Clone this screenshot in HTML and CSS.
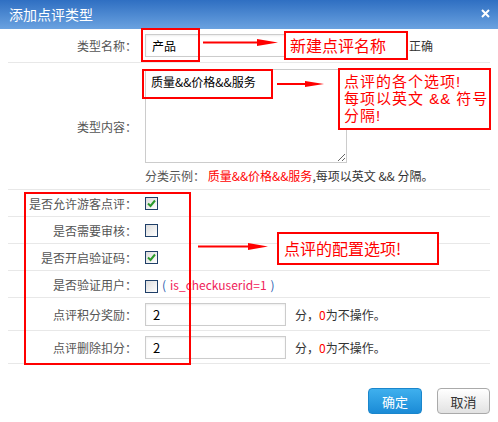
FILE: index.html
```html
<!DOCTYPE html>
<html lang="zh-CN">
<head>
  <meta charset="UTF-8">
  <meta name="viewport" content="width=device-width, initial-scale=1.0">
  <title>添加点评类型</title>
  <link rel="stylesheet" href="styles.css">
</head>
<body>
  <div class="dialog">
    <div class="titlebar">
      <span class="title">添加点评类型</span>
      <span class="close">
        <svg width="9" height="9" viewBox="0 0 9 9"><path d="M1 1L8 8M8 1L1 8" stroke="#fff" stroke-width="2"/></svg>
      </span>
    </div>

    <div class="form">
      <div class="row row-name">
        <div class="label">类型名称：</div>
        <div class="field">
          <input type="text" class="input input-name" value="产品">
          <span class="msg">正确</span>
        </div>
      </div>

      <div class="row row-content">
        <div class="label">类型内容：</div>
        <div class="field field-stack">
          <textarea class="textarea">质量&amp;&amp;价格&amp;&amp;服务</textarea>
          <div class="hint">
            <span class="hint-label">分类示例：</span>
            <span class="red">质量&amp;&amp;价格&amp;&amp;服务</span>,每项以英文 &amp;&amp; 分隔。
          </div>
        </div>
      </div>

      <div class="row row-check">
        <div class="label">是否允许游客点评：</div>
        <div class="field"><span class="checkbox checked"><svg width="11" height="11" viewBox="0 0 11 11"><path d="M2 5.5L4.5 8L9 2.5" fill="none" stroke="#2b9a2b" stroke-width="2"/></svg></span></div>
      </div>
      <div class="row row-check">
        <div class="label">是否需要审核：</div>
        <div class="field"><span class="checkbox"></span></div>
      </div>
      <div class="row row-check">
        <div class="label">是否开启验证码：</div>
        <div class="field"><span class="checkbox checked"><svg width="11" height="11" viewBox="0 0 11 11"><path d="M2 5.5L4.5 8L9 2.5" fill="none" stroke="#2b9a2b" stroke-width="2"/></svg></span></div>
      </div>
      <div class="row row-check">
        <div class="label">是否验证用户：</div>
        <div class="field field-user">
          <span class="checkbox"></span>
          <span class="paren">(</span><span class="code">is_checkuserid=1</span><span class="paren">)</span>
        </div>
      </div>

      <div class="row row-num">
        <div class="label">点评积分奖励：</div>
        <div class="field">
          <input type="text" class="input input-num" value="2">
          <span class="msg">分，<span class="red">0</span>为不操作。</span>
        </div>
      </div>
      <div class="row row-num">
        <div class="label">点评删除扣分：</div>
        <div class="field">
          <input type="text" class="input input-num" value="2">
          <span class="msg">分，<span class="red">0</span>为不操作。</span>
        </div>
      </div>
    </div>

    <div class="actions">
      <button class="btn btn-primary">确定</button>
      <button class="btn btn-default">取消</button>
    </div>

    <!-- 标注 -->
    <div class="mark mark-name"></div>
    <svg class="arrow arrow-name" width="75" height="9" viewBox="0 0 75 9"><path d="M0 4.5H60" stroke="#f00" stroke-width="2"/><path d="M54 1L75 4.5L54 8Z" fill="#f00"/></svg>
    <div class="note note-name">新建点评名称</div>

    <div class="mark mark-content"></div>
    <svg class="arrow arrow-content" width="47" height="8" viewBox="0 0 47 8"><path d="M0 4H34" stroke="#f00" stroke-width="2"/><path d="M28 1L47 4L28 7Z" fill="#f00"/></svg>
    <div class="note note-content">点评的各个选项!<br>每项以英文 &amp;&amp; 符号<br>分隔!</div>

    <div class="mark mark-config"></div>
    <svg class="arrow arrow-config" width="70" height="9" viewBox="0 0 70 9"><path d="M0 4.5H56" stroke="#f00" stroke-width="2"/><path d="M50 1L70 4.5L50 8Z" fill="#f00"/></svg>
    <div class="note note-config">点评的配置选项!</div>
  </div>
</body>
</html>
```

FILE: styles.css
```css
body {
  margin: 0;
  background-color: #fff;
  font-family: "Noto Sans CJK SC", "Liberation Sans", sans-serif;
  font-size: 12px;
  color: #333;
}

.dialog {
  position: relative;
  width: 498px;
  height: 422px;
  background-color: #fff;
}

.titlebar {
  display: flex;
  align-items: center;
  justify-content: space-between;
  height: 29px;
  padding: 0 8px 0 9px;
  background: linear-gradient(to bottom, #2f6fc2, #6aa2e0);
}

.title {
  color: #fff;
  font-size: 14px;
  line-height: 29px;
}

.close {
  display: flex;
  margin-top: -2px;
}

.form {
  margin: 0 8px;
}

.row {
  display: flex;
  align-items: center;
  box-sizing: border-box;
  border-bottom: 1px solid #e8e8e8;
}

.row-name {
  height: 34px;
}

.row-content {
  height: 127px;
}

.row-check {
  height: 27px;
}

.row-num {
  height: 33px;
}

.label {
  width: 129px;
  flex-shrink: 0;
  text-align: right;
  color: #555;
}

.field {
  display: flex;
  align-items: center;
  padding-left: 8px;
}

.field-stack {
  flex-direction: column;
  align-items: flex-start;
  align-self: flex-start;
  padding-top: 6px;
}

.input {
  box-sizing: border-box;
  height: 23px;
  border: 1px solid #ccc;
  box-shadow: inset 0 1px 2px rgba(0, 0, 0, 0.08);
  font-family: "Noto Sans CJK SC", "Liberation Sans", sans-serif;
  color: #000;
  outline: none;
}

.input-name {
  width: 255px;
  padding-left: 6px;
  font-size: 12px;
}

.input-num {
  width: 141px;
  padding-left: 7px;
  font-size: 13px;
}

.msg {
  margin-left: 9px;
  color: #333;
}

.textarea {
  display: block;
  box-sizing: border-box;
  width: 202px;
  height: 94px;
  margin: 0;
  padding: 4px 5px;
  border: 1px solid #ccc;
  font-family: "Noto Sans CJK SC", "Liberation Sans", sans-serif;
  font-size: 12px;
  line-height: 16px;
  color: #000;
  resize: both;
}

.hint {
  height: 25px;
  line-height: 25px;
  white-space: nowrap;
}

.hint-label {
  color: #555;
}

.red {
  color: #f00;
}

.checkbox {
  display: flex;
  align-items: center;
  justify-content: center;
  box-sizing: border-box;
  width: 13px;
  height: 13px;
  border: 1px solid #1f3f68;
  background: linear-gradient(to bottom right, #dcdcdc, #fff);
}

.field-user .checkbox {
  margin-top: 4px;
}

.paren {
  color: #2a5db0;
  margin: 0 4px;
}

.code {
  color: #f0225a;
}

.actions {
  display: flex;
  justify-content: flex-end;
  gap: 15px;
  margin-top: 24px;
  padding-right: 8px;
}

.btn {
  box-sizing: border-box;
  height: 26px;
  border-radius: 4px;
  font-family: "Noto Sans CJK SC", "Liberation Sans", sans-serif;
  font-size: 13px;
  cursor: pointer;
}

.btn-primary {
  width: 54px;
  border: 1px solid #1a86cc;
  background: linear-gradient(to bottom, #3fb0ee, #1b8bd6);
  color: #fff;
}

.btn-default {
  width: 53px;
  border: 1px solid #aaa;
  background: linear-gradient(to bottom, #fff, #e2e2e2);
  color: #333;
}

/* 标注 */
.mark,
.note,
.arrow {
  position: absolute;
}

.mark {
  box-sizing: border-box;
  border: 2px solid #f00;
}

.note {
  box-sizing: border-box;
  border: 2px solid #f00;
  background-color: #fff;
  color: #f00;
  font-size: 16px;
  white-space: nowrap;
}

.mark-name {
  left: 141px;
  top: 28px;
  width: 59px;
  height: 34px;
}

.arrow-name {
  left: 203px;
  top: 38px;
}

.note-name {
  left: 284px;
  top: 31px;
  width: 124px;
  height: 29px;
  padding-left: 4px;
  line-height: 25px;
}

.mark-content {
  left: 142px;
  top: 69px;
  width: 131px;
  height: 30px;
}

.arrow-content {
  left: 277px;
  top: 80px;
}

.note-content {
  left: 338px;
  top: 68px;
  width: 153px;
  height: 62px;
  padding: 3px 0 0 4px;
  font-family: "Liberation Sans", "Noto Sans CJK SC", sans-serif;
  font-size: 15px;
  line-height: 17px;
  letter-spacing: 1px;
}

.mark-config {
  left: 24px;
  top: 192px;
  width: 167px;
  height: 173px;
}

.arrow-config {
  left: 198px;
  top: 242px;
}

.note-config {
  left: 277px;
  top: 232px;
  width: 162px;
  height: 33px;
  padding-left: 5px;
  line-height: 29px;
}
```
